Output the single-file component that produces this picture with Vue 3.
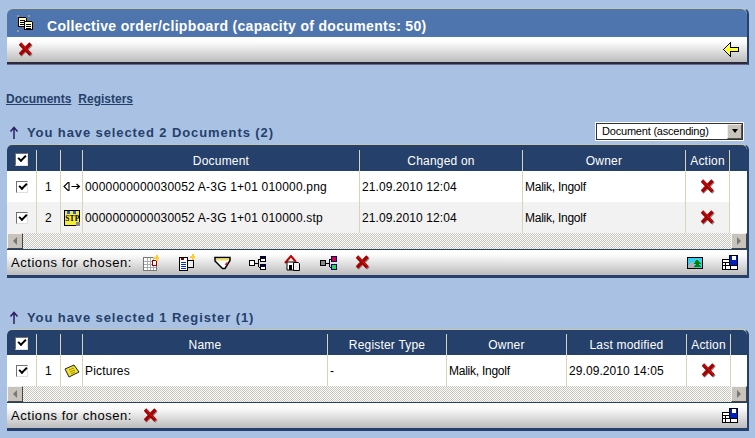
<script setup>
const docs = [
  { n: 1, icon: 'png', name: '0000000000030052 A-3G 1+01 010000.png', date: '21.09.2010 12:04', owner: 'Malik, Ingolf' },
  { n: 2, icon: 'stp', name: '0000000000030052 A-3G 1+01 010000.stp', date: '21.09.2010 12:04', owner: 'Malik, Ingolf' },
]
</script>

<template>
  <div class="page">
    <svg class="defs" width="0" height="0" aria-hidden="true">
      <symbol id="ix" viewBox="0 0 15 15">
        <path d="M2.500 2.500l11 11M13.500 2.500l-11 11" stroke="#8a8a8a" stroke-width="3.200"/>
        <path d="M2 1.500l10.500 11M12.500 1.500 2 12.500" stroke="#a80000" stroke-width="3.400"/>
        <path d="M3 1.500l9.500 10" stroke="#d03030" stroke-width=".7"/>
      </symbol>
      <symbol id="ifloppy" viewBox="0 0 16 15">
        <path d="M0 4h7V0h9v15H0z" fill="#000"/>
        <path d="M8 1h7v9H8z" fill="#0020c0"/>
        <path d="M10 1h4v4h-4z" fill="#fff"/>
        <path d="M1 5h6v2H1zM1 8h2v2H1zM4 8h3v2H4zM1 11h2v3H1zM4 11h4v3H4zM9 11h6v3H9z" fill="#fff"/>
      </symbol>
      <symbol id="iup" viewBox="0 0 10 13">
        <path d="M5 1v12M1.500 5.500 5 1.500l3.500 4" fill="none" stroke="#2b1f5e" stroke-width="1.500"/>
      </symbol>
    </svg>

    <section class="panel top">
      <header class="title">
        <svg class="ti" width="17" height="17" viewBox="0 0 17 17" shape-rendering="crispEdges">
          <path d="M1.500 2.500h7l1 1v8h-8z" fill="#ffffc8" stroke="#000"/>
          <path d="M7.500 6.500h7l1 1v7h-8z" fill="#ffffc8" stroke="#000"/>
          <path d="M3 5h5M3 7h4M3 9h4M9 9h5M9 11h5M9 13h5" stroke="#000"/>
          <path d="M0 0h2v2H0zM11 0h2v2h-2zM0 15h2v2H0z" fill="#9a9a9a"/>
        </svg>
        <h1>Collective order/clipboard (capacity of documents: 50)</h1>
      </header>
      <div class="bar bar-top">
        <svg width="15" height="15"><use href="#ix"/></svg>
        <span class="spring"></span>
        <svg width="16" height="15" viewBox="0 0 16 15" shape-rendering="crispEdges"><path d="M.5 7.500 7.500.5v5h8v4h-8v5z" fill="#ffff40" stroke="#000"/></svg>
      </div>
    </section>

    <nav class="tabs"><a>Documents</a><a>Registers</a></nav>

    <div class="sec-head docs-head">
      <svg width="10" height="13"><use href="#iup"/></svg>
      <h2>You have selected 2 Documents (2)</h2>
      <div class="select"><span>Document (ascending)</span><i><b></b></i></div>
    </div>

    <section class="panel tbl">
      <div class="row hd g1">
        <div class="c"><span class="cb"></span></div><div class="c"></div><div class="c"></div>
        <div class="c">Document</div><div class="c">Changed on</div><div class="c">Owner</div><div class="c">Action</div>
      </div>
      <div v-for="d in docs" :key="d.n" class="row g1" :class="{ alt: d.n === 2 }">
        <div class="c"><span class="cb"></span></div>
        <div class="c">{{ d.n }}</div>
        <div class="c">
          <svg v-if="d.icon === 'png'" width="18" height="11" viewBox="0 0 18 11"><path d="M1 5.500 5 1.500h1v8H5zM8.500 5.500h8M13.500 3l3 2.500-3 2.500" fill="none" stroke="#000" stroke-width="1.100"/></svg>
          <svg v-else width="16" height="16" viewBox="0 0 16 16"><path d="M0 0h16v16H0z" fill="#000"/><path d="M1 1h14v14H1z" fill="#f6ee30"/><path d="M3 1h3v3H3zM9 1h3v3H9z" fill="#3060d0"/><text x="1.200" y="11" font-size="7.500" font-weight="700" font-family="Liberation Serif" fill="#000">STP</text><path d="M12 12h4v4h-4z" fill="#888"/></svg>
        </div>
        <div class="c l">{{ d.name }}</div>
        <div class="c l date">{{ d.date }}</div>
        <div class="c l own">{{ d.owner }}</div>
        <div class="c"><svg width="15" height="15"><use href="#ix"/></svg></div>
        <div class="fill"></div>
      </div>
      <div class="hscroll"><span class="sb"><i class="la"></i></span><span class="sb"><i class="ra"></i></span></div>
      <div class="bar actions">
        <span class="lbl">Actions for chosen:</span>
        <span class="icons">
          <svg width="16" height="16" viewBox="0 0 16 16" shape-rendering="crispEdges"><path d="M.5 2.500h13v13H.5z" fill="#fff" stroke="#777"/><path d="M4 3v12M7 3v12M10 3v12M1 6h12M1 9h12M1 12h12" stroke="#aaa"/><path d="M9.500 5.500h4v5h-4z" fill="#fff" stroke="#900"/><path d="M10 2h3V0h2v2h1v2h-1v2h-2V4h-3z" fill="#fc3"/></svg>
          <svg width="17" height="17" viewBox="0 0 17 17" shape-rendering="crispEdges"><path d="M1.500 3.500h8v13h-8z" fill="#fff" stroke="#000"/><path d="M3 8h5M3 10h5M3 12h5M3 14h5" stroke="#0030c0"/><path d="M3 4h3v2H3z" fill="#900"/><path d="M9.500 6.500h6v7h-6z" fill="#eee" stroke="#000"/><path d="M12 2h2V0h2v2h1v2h-1v2h-2V4h-2z" fill="#fc3"/></svg>
          <svg width="17" height="14" viewBox="0 0 17 14"><path d="M1 1.500h15v3l-5 8H8.500L1 5z" fill="#fff" stroke="#000" stroke-width="1.500"/><path d="M2 2.500h13v2H2z" fill="#f2dc50"/><path d="M11.500 9l2-2.500" stroke="#d02040" stroke-width="2"/></svg>
          <svg width="17" height="14" viewBox="0 0 17 14" shape-rendering="crispEdges"><path d="M5 7h5M10 3h2M10 11h2M9.500 3v8" stroke="#000" fill="none"/><path d="M.5 4.500h5v5h-5zM11.500.5h5v5h-5zM11.500 8.500h5v5h-5z" fill="#fff" stroke="#000"/><path d="M12 1h4v2h-4zM12 9h4v2h-4z" fill="#000080"/></svg>
          <svg width="16" height="16" viewBox="0 0 16 16"><path d="M1 8 7 1l5 6" fill="none" stroke="#c00000" stroke-width="2"/><path d="M3 7h7v8H3z" fill="#fff" stroke="#000"/><path d="M5 10h3v5H5z" fill="#000"/><path d="M9.500 7.500h5l1 1v7h-6z" fill="#eee" stroke="#000"/></svg>
          <svg width="17" height="14" viewBox="0 0 17 14" shape-rendering="crispEdges"><path d="M5 7h5M10 3h2M10 11h2M9.500 3v8" stroke="#000" fill="none"/><path d="M.5 4.500h5v5h-5z" fill="#888" stroke="#000"/><path d="M11.500.5h5v5h-5z" fill="#e00030" stroke="#000080"/><path d="M11.500 8.500h5v5h-5z" fill="#20e040" stroke="#000080"/></svg>
          <svg width="15" height="15"><use href="#ix"/></svg>
        </span>
        <span class="spring"></span>
        <svg class="r1" width="16" height="12" viewBox="0 0 16 12" shape-rendering="crispEdges"><path d="M0 0h16v12H0z" fill="#000"/><path d="M1 1h14v10H1z" fill="#30d0f0"/><path d="M1 8l4-3 3 3v3H1z" fill="#b0b0b0"/><path d="M10 2l-3 5h2l-2 3h7l-2-3h2z" fill="#008000"/></svg>
        <svg width="16" height="15"><use href="#ifloppy"/></svg>
      </div>
    </section>

    <div class="sec-head reg-head">
      <svg width="10" height="13"><use href="#iup"/></svg>
      <h2>You have selected 1 Register (1)</h2>
    </div>

    <section class="panel tbl">
      <div class="row hd g2">
        <div class="c"><span class="cb"></span></div><div class="c"></div><div class="c"></div>
        <div class="c">Name</div><div class="c">Register Type</div><div class="c">Owner</div><div class="c">Last modified</div><div class="c">Action</div>
      </div>
      <div class="row g2">
        <div class="c"><span class="cb"></span></div>
        <div class="c">1</div>
        <div class="c"><svg width="16" height="14" viewBox="0 0 16 14"><path d="M1 5 10 1l5 7-10 5z" fill="#f2e030" stroke="#222"/><path d="M5 6l5-2M6 8l5-2M7 10l4-2" stroke="#a09000"/></svg></div>
        <div class="c l">Pictures</div>
        <div class="c l">-</div>
        <div class="c l own">Malik, Ingolf</div>
        <div class="c l date">29.09.2010 14:05</div>
        <div class="c"><svg width="15" height="15"><use href="#ix"/></svg></div>
        <div class="fill"></div>
      </div>
      <div class="hscroll"><span class="sb"><i class="la"></i></span><span class="sb"><i class="ra"></i></span></div>
      <div class="bar actions">
        <span class="lbl">Actions for chosen:</span>
        <span class="icons"><svg width="15" height="15"><use href="#ix"/></svg></span>
        <span class="spring"></span>
        <svg width="16" height="15"><use href="#ifloppy"/></svg>
      </div>
    </section>
  </div>
</template>

<style>
html, body { margin: 0; background: #a9c2e4; overflow: hidden; }
</style>

<style scoped>
.page {
  width: 755px; height: 438px; box-sizing: border-box; padding: 8px 7px 0;
  font-family: "Liberation Sans", Arial, sans-serif; font-size: 12px; color: #000;
  background: #a9c2e4; overflow: hidden;
}
.defs { position: absolute; }
.panel { width: 740px; border-radius: 6px 6px 0 0; border-right: 2px solid #25406a; border-top: 1px solid #c9c5a8; box-sizing: content-box; }
.top { height: 55px; display: flex; flex-direction: column; border-bottom: 1px solid #6a6a90; }
.title { height: 28px; flex: none; background: #4e75ad; display: flex; align-items: center; padding-left: 10px; border-radius: 6px 6px 0 0; }
.ti { flex: none; margin-right: 13px; }
h1 { margin: 5px 0 0; font-size: 14px; font-weight: 700; color: #fff; letter-spacing: .33px; line-height: 16px; white-space: nowrap; }
.bar { background: linear-gradient(#fff, #fcfcfc 20%, #bcbcbc); display: flex; align-items: center; box-sizing: border-box; }
.bar-top { height: 27px; flex: none; padding: 0 8px 0 11px; border-bottom: 2px solid #2a2a3c; }
.spring { flex: 1; }
.tabs { margin: 28px 0 0 -1px; height: 13px; display: flex; gap: 7px; }
.tabs a { color: #25406a; font-weight: 700; font-size: 12px; line-height: 13px; text-decoration: underline; }
.sec-head { display: flex; align-items: center; color: #25406a; }
.sec-head svg { flex: none; margin: 0 8px 0 2px; }
h2 { margin: 0; font-size: 13px; font-weight: 700; color: #25406a; letter-spacing: .9px; white-space: nowrap; }
.docs-head { height: 24px; margin-top: 14px; }
.reg-head { height: 22px; margin-top: 28px; margin-bottom: 1px; }
.select {
  margin: -2px 5px 0 auto; width: 147px; height: 17px; box-sizing: border-box; background: #fff;
  border: 1px solid #333; outline: 1px solid #fff; display: flex; align-items: center; padding-left: 5px; color: #000; font-size: 11px;
}
.select span { flex: 1; letter-spacing: -.2px; white-space: nowrap; }
.select i { width: 15px; height: 15px; background: #c8c4bc; border: 1px solid; border-color: #eee #555 #555 #eee; box-sizing: border-box; display: flex; align-items: center; justify-content: center; flex: none; }
.select b { border: 3px solid transparent; border-top: 4px solid #000; border-bottom: 0; }
.tbl { background: #fff; border-bottom: 3px solid #25406a; }
.row { display: grid; height: 31px; background: #fff; }
.row.alt { background: #f2f2f2; }
.fill { background: #fff; }
.g1 { grid-template-columns: 30px 24px 22px 277px 163px 163px 44px 1fr; }
.g2 { grid-template-columns: 30px 24px 22px 245px 119px 120px 120px 44px 1fr; }
.c { display: flex; align-items: center; justify-content: center; border-right: 1px solid #d9d3b8; box-sizing: border-box; white-space: nowrap; letter-spacing: .2px; }
.c.l { justify-content: flex-start; padding-left: 2px; }
.c.date { letter-spacing: .08px; }
.c.own { letter-spacing: -.25px; }
.hd { height: 26px; background: #25406a; color: #fff; border-radius: 5px 5px 0 0; padding-top: 5px; box-sizing: border-box; }
.hd.g2 { height: 25px; padding-top: 4px; }
.cb {
  width: 12px; height: 12px; box-sizing: border-box; background: #fff; border: 1px solid; border-color: #707070 #e0e0e0 #e0e0e0 #707070;
  position: relative; display: block;
}
.cb::after { content: ""; position: absolute; left: 2px; top: 1px; width: 6px; height: 3px; border-left: 2px solid #000; border-bottom: 2px solid #000; transform: rotate(-45deg); }
.hd .cb { width: 13px; height: 13px; margin-top: -3px; }
.hscroll { height: 16px; display: flex; justify-content: space-between; background: repeating-conic-gradient(#c8c4bc 0 25%, #fff 0 50%) 0 0 / 2px 2px; }
.sb { width: 16px; height: 16px; box-sizing: border-box; background: #c8c4bc; border: 1px solid; border-color: #f4f4f4 #444 #444 #f4f4f4; display: flex; align-items: center; justify-content: center; }
.la { border: 4px solid transparent; border-right: 4px solid #777; border-left: 0; }
.ra { border: 4px solid transparent; border-left: 4px solid #777; border-right: 0; }
.actions { height: 26px; padding: 0 9px 0 4px; border-top: 1px solid #25406a; }
.lbl { font-size: 13px; letter-spacing: .55px; white-space: nowrap; }
.icons { display: grid; grid-auto-flow: column; grid-auto-columns: 35.300px; align-items: center; justify-items: start; margin-left: 11px; }
.icons svg, .actions > svg { display: block; }
.r1 { margin-right: 19px; }
</style>
